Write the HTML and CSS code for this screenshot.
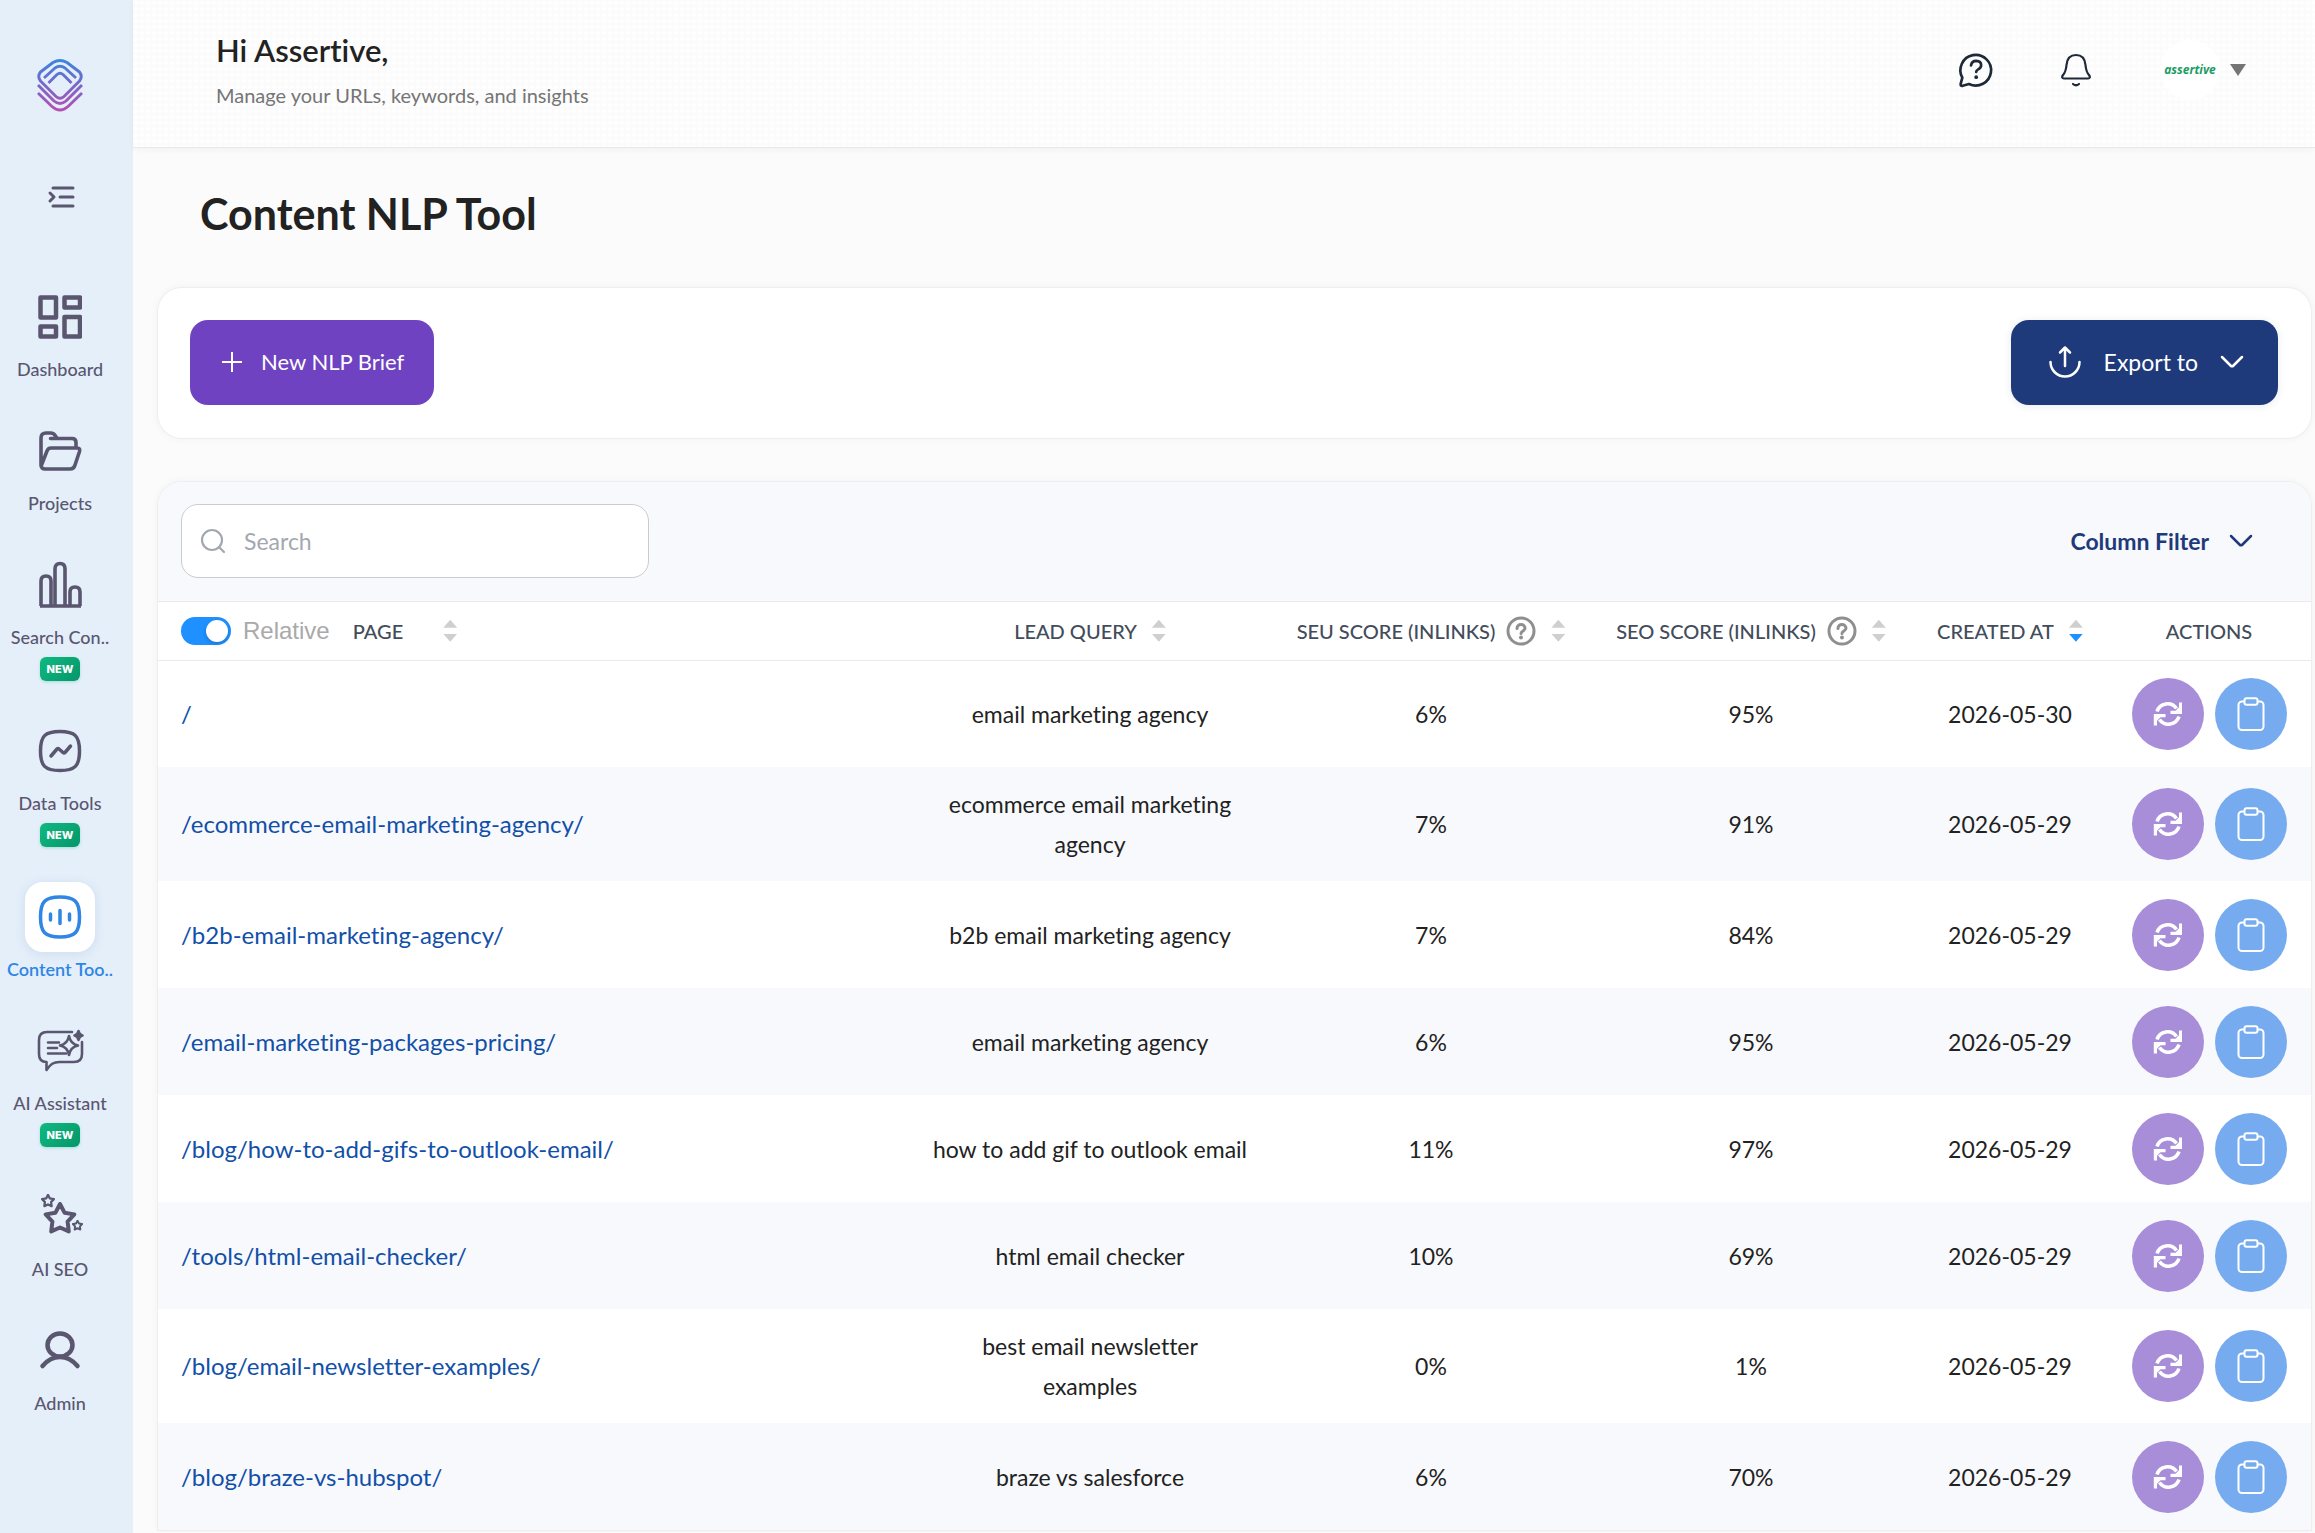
FILE: index.html
```html
<!DOCTYPE html>
<html lang="en">
<head>
<meta charset="utf-8">
<meta name="viewport" content="width=device-width, initial-scale=1">
<title>Content NLP Tool</title>
<link rel="stylesheet" href="styles.css">
</head>
<body>
<svg class="sprite" aria-hidden="true">
  <symbol id="chevron" viewBox="0 0 24 14"><path d="M2 2l8.500 8.500q1.500 1.500 3 0L22 2" fill="none" stroke="currentColor" stroke-width="2.500" stroke-linecap="round"/></symbol>
  <symbol id="help" viewBox="0 0 30 30"><g fill="none" stroke="currentColor" stroke-width="3" stroke-linecap="round"><circle cx="15" cy="15" r="13"/><path d="M11 12.500c0-2.500 1.800-4 4-4s4 1.500 4 3.700c0 2.800-4 2.800-4 5.300"/></g><circle cx="15" cy="21.500" r="2" fill="currentColor"/></symbol>
  <symbol id="refresh" viewBox="0 0 30 28"><g fill="none" stroke="currentColor" stroke-width="3.600"><path d="M4 11.500A11 11 0 0 1 23.500 8.500"/><path d="M26 16.500A11 11 0 0 1 6.500 19.500"/></g><path d="M29 2.500v11.500H17.500v-3.200h5L26 7.300V2.500zM.8 25.500V14h11.700v3.200h-5L4 20.700v4.800z" fill="currentColor"/></symbol>
  <symbol id="clip" viewBox="0 0 28 34"><g fill="none" stroke="currentColor" stroke-width="2"><path d="M7.500 4.500H5a3.500 3.500 0 0 0-3.500 3.500v21.500A3.500 3.500 0 0 0 5 33h18a3.500 3.500 0 0 0 3.500-3.500V8A3.500 3.500 0 0 0 23 4.500h-2.500"/><rect x="7.500" y="1.200" width="13" height="6.600" rx="2"/></g></symbol>
  <symbol id="star" viewBox="-17 -17 34 34"><path d="M0-15 4.500-6.300 14.300-4.600 7.600 2.600 8.800 12.400 0 8.500-8.800 12.400-7.600 2.600-14.300-4.600-4.500-6.300Z" fill="none" stroke="currentColor" stroke-linejoin="round"/></symbol>
</svg>

<div class="app">
  <aside class="sidebar">
    <a class="logo" href="#" aria-label="Home">
      <svg width="46" height="53" viewBox="0 0 46 53">
        <defs><linearGradient id="brand" gradientUnits="userSpaceOnUse" x1="0" y1="0" x2="0" y2="53"><stop offset="0" stop-color="#3a86dc"/><stop offset=".5" stop-color="#7a66c8"/><stop offset="1" stop-color="#b94fae"/></linearGradient></defs>
        <g fill="none" stroke="url(#brand)" stroke-width="2.900" stroke-linejoin="round">
          <path d="M16 3.500Q23-.5 30 3.500L42.500 13Q46 17.500 42.500 22L27 37.500Q23 41 19 37.500L3.500 22Q0 17.500 3.500 13Z"/>
          <path d="M7 19 18 9Q23 5.500 28 9L39 19M11.500 24 20 15.500Q23 13 26 15.500L34.500 24"/>
          <path d="M1 26 17 42Q23 47 29 42L45 26M1 34 15 47.500Q23 54.500 31 47.500L45 34"/>
        </g>
      </svg>
    </a>
    <button class="collapse" type="button" aria-label="Expand menu">
      <svg width="28" height="24" viewBox="0 0 28 24" fill="none" stroke="currentColor" stroke-width="3" stroke-linecap="round" stroke-linejoin="round"><path d="M6 3h20M13 12h13M6 21h20M3 8l4 4-4 4"/></svg>
    </button>
    <nav class="menu" aria-label="Main">
      <a class="item" href="#"><span class="icon"><svg width="44" height="44" viewBox="0 0 44 44" fill="none" stroke="currentColor" stroke-width="4.500" stroke-linejoin="round"><path d="M2.500 2.500H18v20H2.500zM26.500 2.500H42v10H26.500zM2.500 31.500H18v10H2.500zM26.500 22H42v19.500H26.500z"/></svg></span><span class="label">Dashboard</span></a>
      <a class="item" href="#"><span class="icon"><svg width="44" height="44" viewBox="0 0 44 44" fill="none" stroke="currentColor" stroke-width="3.600" stroke-linecap="round" stroke-linejoin="round"><path d="M3 36V9q0-5 5-5h4.500q3.500 0 5 3 1.500 2.500 2 2.500M12.500 9.500H34q4 0 4 4v5.500M3.500 36 9 22q1-3 4-3h26q3.500 0 2.500 3.500L37 36q-1 4-5 4H7q-4 0-4-4"/></svg></span><span class="label">Projects</span></a>
      <a class="item" href="#"><span class="icon"><svg width="44" height="48" viewBox="0 0 44 48" fill="none" stroke="currentColor" stroke-width="3.600" stroke-linejoin="round"><path d="M3 45V20q0-5 5-5t5 5v25M17 45V8q0-5.500 5-5.500T27 8v37M32 45V31q0-5 5-5t5 5v14M2 45h41"/></svg></span><span class="label">Search Con..</span><span class="badge">NEW</span></a>
      <a class="item" href="#"><span class="icon"><svg width="44" height="44" viewBox="0 0 44 44" fill="none" stroke="currentColor" stroke-width="3.500" stroke-linecap="round" stroke-linejoin="round"><path d="M22 2.500c15 0 19.500 4.500 19.500 19.500S37 41.500 22 41.500 2.500 37 2.500 22 7 2.500 22 2.500z"/><path d="M13 27l6-7q1-1 2 0l4 3.500q1 1 2 0l5.500-6.500"/></svg></span><span class="label">Data Tools</span><span class="badge">NEW</span></a>
      <a class="item active" href="#" aria-current="page"><span class="icon"><svg width="44" height="44" viewBox="0 0 44 44" fill="none" stroke="currentColor" stroke-width="3.500" stroke-linecap="round"><path d="M22 2c15 0 19.500 4.500 19.500 20S37 42 22 42 2.500 37.500 2.500 22 7 2 22 2z"/><path d="M12.500 19v6M22 15.500v13M31.500 19v6"/></svg></span><span class="label">Content Too..</span></a>
      <a class="item" href="#"><span class="icon"><svg width="48" height="48" viewBox="0 0 48 48" fill="none" stroke="currentColor" stroke-width="2.600" stroke-linecap="round" stroke-linejoin="round"><path d="M36 5H11q-8 0-8 8v14q0 8 7.500 8v8c4-6 7-8 13-8H38q8 0 8-8V15M12 15.500h11M12 21h9M12 26.500h18"/><path d="M33 9q1.500 8 9 9.500-7.500 1.500-9 9.500-1.500-8-9-9.500 7.500-1.500 9-9.500z"/><path d="M42.500 4q1 4 4 4.500-3 .5-4 4.500-1-4-4-4.500 3-.5 4-4.500z" fill="currentColor"/></svg></span><span class="label">AI Assistant</span><span class="badge">NEW</span></a>
      <a class="item" href="#"><span class="icon"><svg width="48" height="48" viewBox="0 0 48 48"><use href="#star" x="7" y="9" width="34" height="34" stroke-width="4"/><use href="#star" x="5" y="1" width="14" height="14" stroke-width="5.500"/><use href="#star" x="36" y="27" width="11" height="11" stroke-width="6"/></svg></span><span class="label">AI SEO</span></a>
      <a class="item" href="#"><span class="icon"><svg width="44" height="44" viewBox="0 0 44 44" fill="none" stroke="currentColor" stroke-width="4.500" stroke-linecap="round"><ellipse cx="22" cy="16" rx="12.500" ry="11.500"/><path d="M4.500 37Q12 28 22 28t17.500 9"/></svg></span><span class="label">Admin</span></a>
    </nav>
  </aside>

  <div class="main">
    <header class="topbar">
      <div class="greeting"><p class="hello">Hi Assertive,</p><p class="sub">Manage your URLs, keywords, and insights</p></div>
      <div class="tools">
        <button class="tool" type="button" aria-label="Help"><svg width="40" height="40" viewBox="0 0 24 24" fill="none" stroke="currentColor" stroke-width="1.600" stroke-linecap="round" stroke-linejoin="round"><path d="M3.800 16.600A9.200 9.200 0 1 1 7.800 20.400L4 21.500Q2.500 21.700 2.800 20.300Z"/><path d="M9 9.300q.4-2.800 3.100-2.800 3 .1 3 2.700 0 1.500-1.800 2.400-1.200.6-1.200 1.600"/><path d="M12.100 16.200v.1" stroke-width="2.200"/></svg></button>
        <button class="tool" type="button" aria-label="Notifications"><svg width="34" height="36" viewBox="0 0 34 36" fill="none" stroke="currentColor" stroke-width="2.200" stroke-linecap="round" stroke-linejoin="round"><path d="M17 3c6 0 9 4 9.500 10 .4 5 .8 7 3.500 10 1.500 2 1 3.500-1 3.500H5c-2 0-2.500-1.500-1-3.500 2.700-3 3.100-5 3.500-10C8 7 11 3 17 3zM14 32q3 2.500 6 0"/></svg></button>
        <button class="account" type="button"><span class="avatar">assertive</span><svg width="16" height="12" viewBox="0 0 16 12"><path d="M0 0h16L8 12z" fill="#757575"/></svg></button>
      </div>
    </header>

    <main class="content">
      <h1>Content NLP Tool</h1>
      <section class="card actionbar">
        <button class="btn new" type="button"><svg width="20" height="20" viewBox="0 0 20 20"><path d="M10 0v20M0 10h20" stroke="currentColor" stroke-width="2"/></svg>New NLP Brief</button>
        <button class="btn export" type="button"><svg width="34" height="34" viewBox="0 0 34 34" fill="none" stroke="currentColor" stroke-width="2.500" stroke-linecap="round" stroke-linejoin="round"><path d="M2.500 17a14.500 14.500 0 0 0 29 0M17 21V3M12 7.500 17 2.500l5 5"/></svg>Export to<svg width="24" height="14"><use href="#chevron"/></svg></button>
      </section>

      <section class="card panel">
        <div class="filters">
          <label class="search"><svg width="26" height="26" viewBox="0 0 26 26" fill="none" stroke="#a3a8b0" stroke-width="2.200" stroke-linecap="round"><circle cx="12" cy="12" r="10"/><path d="M19.500 19.500 24 24"/></svg><input type="search" placeholder="Search" aria-label="Search"></label>
          <button class="colfilter" type="button">Column Filter<svg width="24" height="14"><use href="#chevron"/></svg></button>
        </div>
        <table>
          <colgroup><col><col class="c-lead"><col class="c-seu"><col class="c-seo"><col class="c-date"><col class="c-act"></colgroup>
          <thead>
            <tr>
              <th scope="col"><div class="th first"><label class="relative"><input type="checkbox" role="switch" checked>Relative</label>PAGE<span class="sort"></span></div></th>
              <th scope="col"><div class="th">LEAD QUERY<span class="sort"></span></div></th>
              <th scope="col"><div class="th">SEU SCORE (INLINKS)<svg class="help" width="30" height="30"><use href="#help"/></svg><span class="sort"></span></div></th>
              <th scope="col"><div class="th">SEO SCORE (INLINKS)<svg class="help" width="30" height="30"><use href="#help"/></svg><span class="sort"></span></div></th>
              <th scope="col" aria-sort="descending"><div class="th">CREATED AT<span class="sort desc"></span></div></th>
              <th scope="col"><div class="th">ACTIONS</div></th>
            </tr>
          </thead>
          <tbody>
            <tr><td><a href="#">/</a></td><td>email marketing agency</td><td>6%</td><td>95%</td><td>2026-05-30</td><td><div class="acts"><button class="round redo" type="button" aria-label="Refresh"><svg width="30" height="28"><use href="#refresh"/></svg></button><button class="round copy" type="button" aria-label="Brief"><svg width="28" height="34"><use href="#clip"/></svg></button></div></td></tr>
            <tr><td><a href="#">/ecommerce-email-marketing-agency/</a></td><td>ecommerce email marketing<br>agency</td><td>7%</td><td>91%</td><td>2026-05-29</td><td><div class="acts"><button class="round redo" type="button" aria-label="Refresh"><svg width="30" height="28"><use href="#refresh"/></svg></button><button class="round copy" type="button" aria-label="Brief"><svg width="28" height="34"><use href="#clip"/></svg></button></div></td></tr>
            <tr><td><a href="#">/b2b-email-marketing-agency/</a></td><td>b2b email marketing agency</td><td>7%</td><td>84%</td><td>2026-05-29</td><td><div class="acts"><button class="round redo" type="button" aria-label="Refresh"><svg width="30" height="28"><use href="#refresh"/></svg></button><button class="round copy" type="button" aria-label="Brief"><svg width="28" height="34"><use href="#clip"/></svg></button></div></td></tr>
            <tr><td><a href="#">/email-marketing-packages-pricing/</a></td><td>email marketing agency</td><td>6%</td><td>95%</td><td>2026-05-29</td><td><div class="acts"><button class="round redo" type="button" aria-label="Refresh"><svg width="30" height="28"><use href="#refresh"/></svg></button><button class="round copy" type="button" aria-label="Brief"><svg width="28" height="34"><use href="#clip"/></svg></button></div></td></tr>
            <tr><td><a href="#">/blog/how-to-add-gifs-to-outlook-email/</a></td><td>how to add gif to outlook email</td><td>11%</td><td>97%</td><td>2026-05-29</td><td><div class="acts"><button class="round redo" type="button" aria-label="Refresh"><svg width="30" height="28"><use href="#refresh"/></svg></button><button class="round copy" type="button" aria-label="Brief"><svg width="28" height="34"><use href="#clip"/></svg></button></div></td></tr>
            <tr><td><a href="#">/tools/html-email-checker/</a></td><td>html email checker</td><td>10%</td><td>69%</td><td>2026-05-29</td><td><div class="acts"><button class="round redo" type="button" aria-label="Refresh"><svg width="30" height="28"><use href="#refresh"/></svg></button><button class="round copy" type="button" aria-label="Brief"><svg width="28" height="34"><use href="#clip"/></svg></button></div></td></tr>
            <tr><td><a href="#">/blog/email-newsletter-examples/</a></td><td>best email newsletter<br>examples</td><td>0%</td><td>1%</td><td>2026-05-29</td><td><div class="acts"><button class="round redo" type="button" aria-label="Refresh"><svg width="30" height="28"><use href="#refresh"/></svg></button><button class="round copy" type="button" aria-label="Brief"><svg width="28" height="34"><use href="#clip"/></svg></button></div></td></tr>
            <tr><td><a href="#">/blog/braze-vs-hubspot/</a></td><td>braze vs salesforce</td><td>6%</td><td>70%</td><td>2026-05-29</td><td><div class="acts"><button class="round redo" type="button" aria-label="Refresh"><svg width="30" height="28"><use href="#refresh"/></svg></button><button class="round copy" type="button" aria-label="Brief"><svg width="28" height="34"><use href="#clip"/></svg></button></div></td></tr>
          </tbody>
        </table>
      </section>
    </main>
  </div>
</div>
</body>
</html>
```
FILE: styles.css
```css
* { box-sizing: border-box; }
body { margin: 0; background: #fbfbfb; color: #222; font-family: Lato, "Open Sans", sans-serif; font-size: 23px; font-variant-ligatures: none; }
p, h1 { margin: 0; }
a { text-decoration: none; }
button { font: inherit; color: inherit; border: 0; background: none; padding: 0; cursor: pointer; }
svg { display: block; flex: none; }
.sprite { position: absolute; width: 0; height: 0; }

.app { display: flex; min-height: 100vh; }

/* Sidebar */
.sidebar { flex: none; width: 133px; padding: 59px 13px 0 0; background: #e4effa; color: #5a5670; display: flex; flex-direction: column; align-items: center; }
.logo { margin-bottom: 72px; }
.collapse { margin: 0 0 72px 2px; height: 26px; }
.menu { display: flex; flex-direction: column; align-items: center; width: 100%; }
.item { display: flex; flex-direction: column; align-items: center; padding-bottom: 34px; color: inherit; }
.icon { display: grid; place-items: center; width: 70px; height: 70px; margin-bottom: 4px; border-radius: 18px; }
.label { font-size: 18px; line-height: 26px; font-weight: 500; white-space: nowrap; }
.badge { margin: 7px 0 1px; width: 40px; height: 24px; border-radius: 6px; background: linear-gradient(135deg, #10b981, #059669); color: #fff; font: 800 11px/24px Inter, sans-serif; text-align: center; box-shadow: 0 1px 3px rgba(16, 185, 129, .3); }
.active { color: #2f86e5; }
.active .icon { background: #fff; box-shadow: 0 2px 12px rgba(60, 90, 130, .12); }
.active .label { font-weight: 600; }

/* Top bar */
.main { flex: 1; min-width: 0; }
.topbar { display: flex; align-items: center; justify-content: space-between; height: 148px; padding: 0 69px 8px 83px; background: radial-gradient(circle at 3px 3px, #fff 1px, #fbfbfb 3px) 0 0 / 6px 6px; border-bottom: 1px solid #e8e8e8; box-shadow: 0 2px 6px rgba(0, 0, 0, .04); }
.hello { font-size: 31px; line-height: 44px; font-weight: 600; color: #222; }
.sub { margin-top: 6px; font-size: 20px; line-height: 34px; color: #757575; }
.tools { display: flex; align-items: center; color: #1f2937; }
.tool { display: grid; place-items: center; width: 40px; height: 40px; margin-right: 60px; }
.account { display: flex; align-items: center; gap: 10px; margin-left: 4px; }
.avatar { display: grid; place-items: center; width: 60px; height: 60px; border-radius: 50%; background: #fff; color: #1b9c64; font: italic 700 12px "Open Sans", sans-serif; }

/* Page */
.content { padding: 0 4px 0 25px; }
h1 { padding: 41px 0 49px 42px; font-size: 43px; line-height: 50px; font-weight: 700; color: #222; }
.card { border-radius: 24px; background: #fff; box-shadow: 0 0 0 1px #eee, 0 0 10px rgba(0, 0, 0, .05); }
.actionbar { display: flex; justify-content: space-between; align-items: center; padding: 32px 33px 33px 32px; }
.btn { display: flex; align-items: center; height: 85px; padding-bottom: 2px; border-radius: 18px; color: #fff; font-size: 22px; }
.new { gap: 19px; padding-left: 32px; padding-right: 30px; background: #6f42c1; }
.export { gap: 22px; padding-left: 37px; padding-right: 34px; background: #1e3a7b; font-size: 23px; box-shadow: 0 1px 8px rgba(30, 58, 123, .1); }

.panel { margin-top: 44px; overflow: hidden; border-radius: 24px 24px 0 0; }
.filters { display: flex; align-items: center; justify-content: space-between; height: 120px; padding: 0 58px 2px 23px; background: #f8f9fc; border-bottom: 1px solid #e8eaee; }
.search { display: flex; align-items: center; gap: 16px; width: 468px; height: 74px; padding: 0 18px; border: 1px solid #ccc; border-radius: 17px; background: #fff; }
.search input { flex: 1; min-width: 0; border: 0; outline: 0; background: none; font: inherit; }
.search input::placeholder { color: #a3a8b0; opacity: 1; }
.colfilter { display: flex; align-items: center; gap: 20px; color: #1e3a7b; font-weight: 700; }

/* Table */
table { width: 100%; border-collapse: collapse; table-layout: fixed; }
.c-lead { width: 366px; }
.c-seu { width: 316px; }
.c-seo { width: 324px; }
.c-date { width: 194px; }
.c-act { width: 204px; }
th { height: 58px; padding: 0; border-bottom: 1px solid #e8eaee; font-size: 20px; font-weight: 500; color: #434c5b; }
.th { display: flex; align-items: center; justify-content: center; gap: 15px; white-space: nowrap; }
.th.first { justify-content: flex-start; padding-left: 23px; gap: 40px; }
.help { color: #8f8f8f; margin-left: -4px; }
.sort { display: grid; gap: 6px; }
.sort::before, .sort::after { content: ""; width: 14px; height: 8px; background: #cfcfcf; }
.sort::before { clip-path: polygon(50% 0, 100% 100%, 0 100%); }
.sort::after { clip-path: polygon(0 0, 100% 0, 50% 100%); }
.sort.desc::after { background: #1e90ff; }
.relative { display: flex; align-items: center; gap: 12px; margin-right: -17px; font: 24px/28px "Liberation Sans", Arial, sans-serif; color: #a9a9a9; }
.relative input { appearance: none; display: flex; align-items: center; justify-content: flex-end; width: 50px; height: 28px; margin: 0; padding: 0 3px; border-radius: 14px; background: #1e90ff; }
.relative input::before { content: ""; width: 22px; height: 22px; border-radius: 50%; background: #fff; box-shadow: 0 2px 4px rgba(0, 35, 11, .2); }
td { height: 107px; padding: 17px 0; text-align: center; line-height: 40px; }
td:first-child { padding-left: 23px; text-align: left; font-size: 24px; }
td:last-child { padding: 0; }
td a { color: #1250a8; }
tbody tr:nth-child(even) { background: #f8f9fc; }
.acts { display: flex; justify-content: center; gap: 11px; }
.round { display: grid; place-items: center; width: 72px; height: 72px; border-radius: 50%; color: #fff; }
.redo { background: #a88dd8; }
.copy { background: #76acef; }
```
